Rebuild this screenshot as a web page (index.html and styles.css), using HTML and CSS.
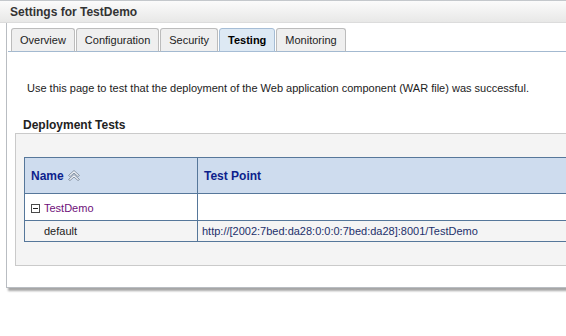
FILE: index.html
```html
<!DOCTYPE html>
<html lang="en">
<head>
  <meta charset="UTF-8">
  <title>Settings for TestDemo</title>
  <link rel="stylesheet" href="styles.css">
</head>
<body>
  <div class="title-bar">Settings for TestDemo</div>

  <div class="panel">
    <!-- Tabs -->
    <div class="tabs">
      <div class="tab">Overview</div>
      <div class="tab">Configuration</div>
      <div class="tab">Security</div>
      <div class="tab active">Testing</div>
      <div class="tab">Monitoring</div>
    </div>

    <p class="intro">Use this page to test that the deployment of the Web application component (WAR file) was successful.</p>

    <h2 class="section-title">Deployment Tests</h2>

    <div class="table-box">
      <table class="tests">
        <thead>
          <tr>
            <th class="col-name">
              <span class="th-inner">Name
                <svg class="sort-icon" width="14" height="11" viewBox="0 0 14 11">
                  <polygon points="1.5,9.5 7,4.5 12.5,9.5 11,10.5 7,7 3,10.5" fill="#f7f9fc" stroke="#8592a3" stroke-width="1" stroke-linejoin="round"/>
                  <polygon points="1.5,5.5 7,0.5 12.5,5.5 11,6.5 7,3 3,6.5" fill="#f7f9fc" stroke="#8592a3" stroke-width="1" stroke-linejoin="round"/>
                </svg>
              </span>
            </th>
            <th>Test Point</th>
          </tr>
        </thead>
        <tbody>
          <tr class="row-app">
            <td>
              <span class="tree-toggle">
                <svg width="9" height="9" viewBox="0 0 9 9">
                  <rect x="0.5" y="0.5" width="8" height="8" fill="#fff" stroke="#4a4a4a"/>
                  <line x1="2" y1="4.5" x2="7" y2="4.5" stroke="#222"/>
                </svg>
              </span><a class="app-link">TestDemo</a>
            </td>
            <td></td>
          </tr>
          <tr class="row-point">
            <td class="indent">default</td>
            <td class="url">http://[2002:7bed:da28:0:0:0:7bed:da28]:8001/TestDemo</td>
          </tr>
        </tbody>
      </table>
    </div>
  </div>
</body>
</html>
```

FILE: styles.css
```css
* {
  margin: 0;
  padding: 0;
  box-sizing: border-box;
}

body {
  font-family: 'Liberation Sans', Arial, sans-serif;
  font-size: 11px;
  color: #222;
  background-color: #fff;
  width: 566px;
  height: 336px;
  overflow: hidden;
}

/* Title bar */
.title-bar {
  height: 23px;
  padding-left: 10px;
  line-height: 22px;
  font-size: 12px;
  font-weight: bold;
  color: #333;
  border-top: 1px solid #c4c8cc;
  border-bottom: 1px solid #dcdcdc;
  background: linear-gradient(#fbfbfb, #e8e8e7);
}

/* Settings panel */
.panel {
  width: 760px;
  margin-left: 6px;
  padding-top: 5px;
  padding-bottom: 21px;
  border-left: 1px solid #b9bdc2;
  border-bottom: 1px solid #b9bdc2;
  box-shadow: 2px 3px 2px rgba(0, 0, 0, 0.35);
}

.tabs {
  display: flex;
  gap: 1px;
  margin-left: 1px;
  padding-left: 3px;
  border-bottom: 1px solid #a3b9d0;
}

.tab {
  height: 24px;
  line-height: 23px;
  padding: 0 8px;
  margin-bottom: -1px;
  color: #222;
  background-color: #efefef;
  border: 1px solid #bcbcbc;
  border-bottom-color: #a3b9d0;
  border-radius: 3px 3px 0 0;
}

.tab.active {
  font-weight: bold;
  color: #000;
  background-color: #dde9f4;
  border-color: #a6bdd5;
}

.intro {
  padding: 29px 0 0 20px;
  line-height: 14px;
}

.section-title {
  padding: 23px 0 0 16px;
  font-size: 12px;
  font-weight: bold;
  color: #222;
  line-height: 14px;
}

/* Table area */
.table-box {
  margin: 1px 0 0 8px;
  padding: 23px 0 23px 8px;
  background-color: #f4f4f4;
  border: 1px solid #cacaca;
}

.tests {
  width: 640px;
  border-collapse: collapse;
  border: 1px solid #56779a;
}

.tests th,
.tests td {
  border: 1px solid #56779a;
  text-align: left;
  vertical-align: middle;
}

.tests th {
  height: 36px;
  padding: 0 6px;
  font-size: 12px;
  font-weight: bold;
  color: #0d1f8c;
  background-color: #cedcee;
}

.col-name {
  width: 173px;
}

.th-inner {
  display: inline-flex;
  align-items: center;
  gap: 3px;
}

.row-app td {
  height: 27px;
  padding: 2px 6px 0;
  background-color: #fff;
}

.tree-toggle {
  display: inline-block;
  vertical-align: -1px;
  margin-right: 4px;
}

.app-link {
  color: #6e0f7a;
}

.row-point td {
  height: 21px;
  padding: 0 4px;
  background-color: #f4f4f4;
}

.row-point td.indent {
  padding-left: 19px;
}

.url {
  color: #23306b;
}
```
